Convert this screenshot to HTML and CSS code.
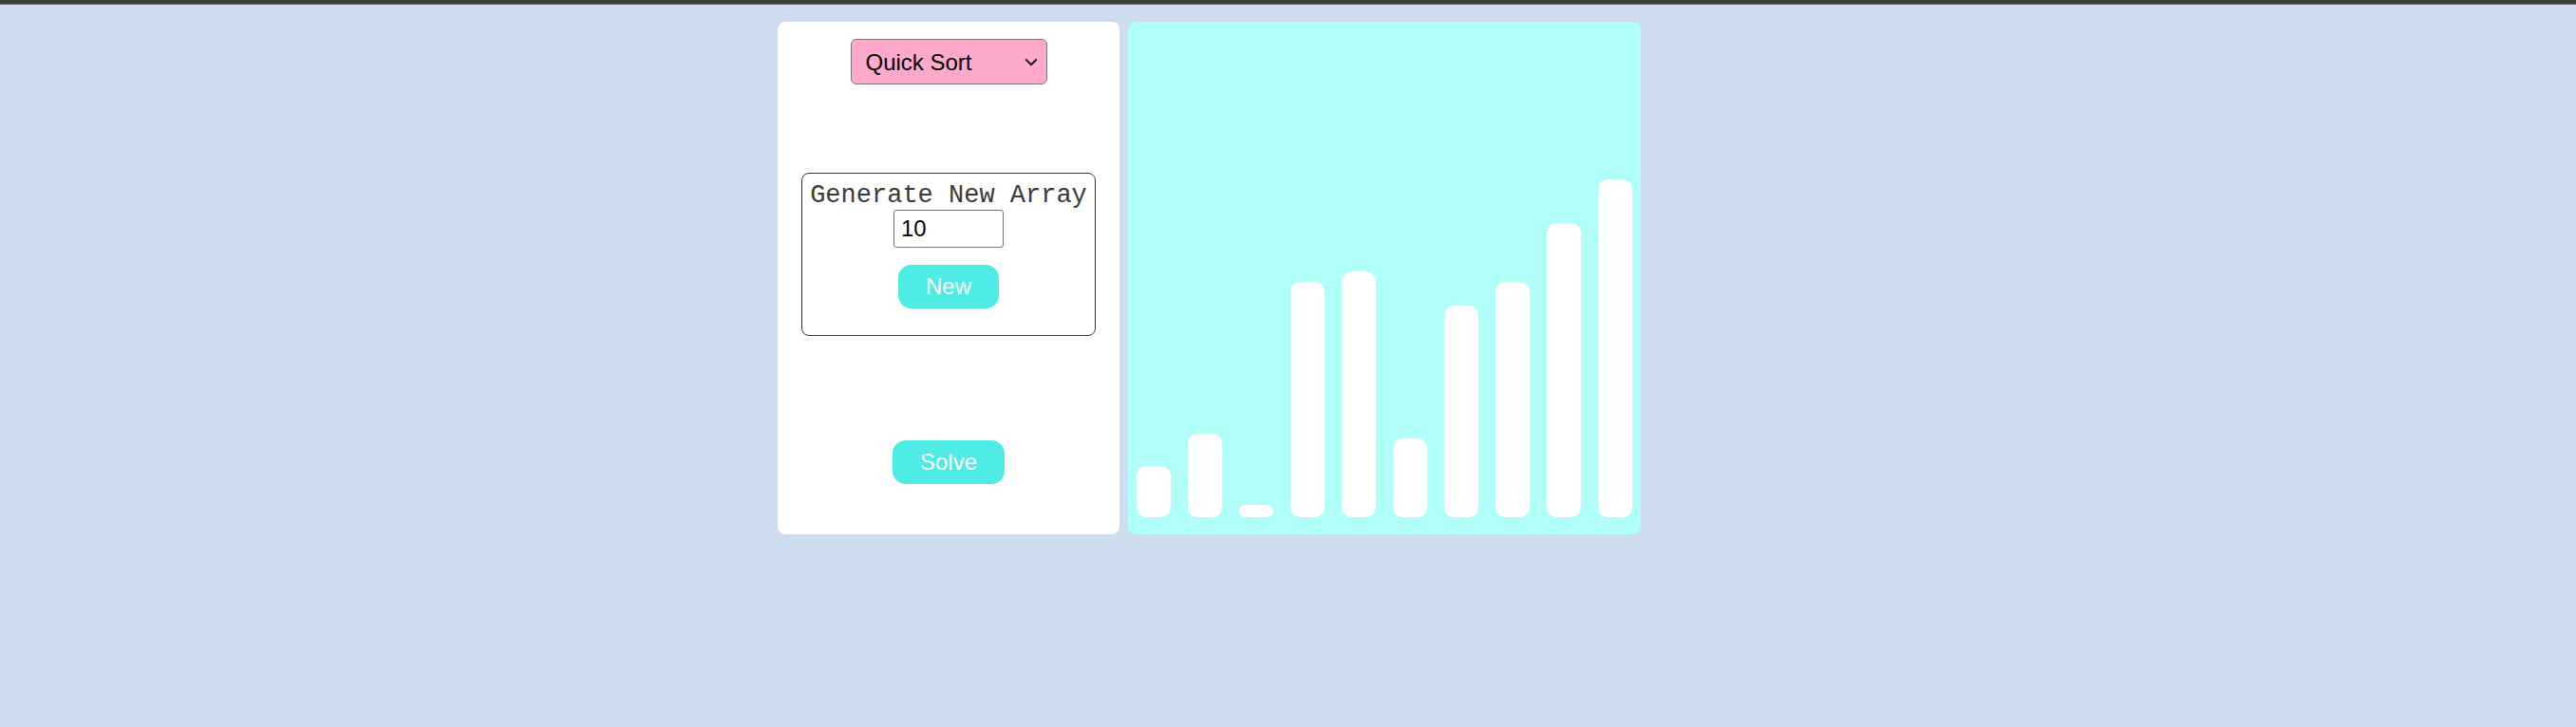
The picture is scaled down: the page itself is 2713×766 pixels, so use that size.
FILE: index.html
```
<!DOCTYPE html>
<html>
<head>
<meta charset="utf-8">
<title>Sorting Visualizer</title>
<link rel="stylesheet" href="styles.css">
</head>
<body>
<div class="topbar"></div>
<div class="main">
  <div class="controls">
    <div class="select-wrap">
      <select class="algo">
        <option>Quick Sort</option>
        <option>Bubble Sort</option>
        <option>Merge Sort</option>
      </select>
      <svg class="chev" width="14" height="9" viewBox="0 0 14 9"><path d="M1.2 1.5 L7 7.2 L12.8 1.5" fill="none" stroke="#111" stroke-width="2"/></svg>
    </div>
    <div class="gen">
      <div class="gen-title">Generate New Array</div>
      <input class="size" type="text" value="10">
      <button class="btn btn-new">New</button>
    </div>
    <button class="btn btn-solve">Solve</button>
  </div>
  <div class="chart">
    <div class="bar" style="height:54px"></div>
    <div class="bar" style="height:88px"></div>
    <div class="bar" style="height:13px"></div>
    <div class="bar" style="height:248px"></div>
    <div class="bar" style="height:259px"></div>
    <div class="bar" style="height:83px"></div>
    <div class="bar" style="height:223px"></div>
    <div class="bar" style="height:248px"></div>
    <div class="bar" style="height:310px"></div>
    <div class="bar" style="height:356px"></div>
  </div>
</div>
</body>
</html>
```
FILE: styles.css
```
html, body {
  margin: 0;
  padding: 0;
}
body {
  background: #cddcee;
  font-family: "Liberation Sans", Arial, sans-serif;
  min-height: 766px;
}
.topbar {
  height: 4px;
  background: #3e3e3e;
  border-bottom: 1px solid #6a6a6a;
}
.main {
  display: flex;
  gap: 9px;
  padding-left: 819px;
  margin-top: 18px;
}
.controls {
  width: 360px;
  height: 540px;
  flex: none;
  background: #ffffff;
  border-radius: 8px;
  display: flex;
  flex-direction: column;
  align-items: center;
  box-sizing: border-box;
  padding-top: 18px;
}
.select-wrap {
  position: relative;
  width: 207px;
  height: 48px;
}
.algo {
  appearance: none;
  -webkit-appearance: none;
  width: 207px;
  height: 48px;
  box-sizing: border-box;
  background: #ffaacc;
  border: 1px solid #767676;
  border-radius: 6px;
  font-family: "Liberation Sans", Arial, sans-serif;
  font-size: 24px;
  color: #000;
  padding: 0 0 0 15px;
  margin: 0;
}
.chev {
  position: absolute;
  right: 10px;
  top: 20px;
  pointer-events: none;
}
.gen {
  margin-top: 93px;
  width: 310px;
  height: 172px;
  box-sizing: border-box;
  border: 1px solid #333;
  border-radius: 8px;
  display: flex;
  flex-direction: column;
  align-items: center;
  padding-top: 8px;
}
.gen-title {
  font-family: "Liberation Mono", "Courier New", monospace;
  font-size: 27px;
  color: #3a3a3a;
  white-space: nowrap;
}
.size {
  width: 116px;
  height: 40px;
  box-sizing: border-box;
  border: 1px solid #767676;
  border-radius: 3px;
  font-family: "Liberation Sans", Arial, sans-serif;
  font-size: 24px;
  padding: 0 0 0 7px;
  margin: 0;
  color: #000;
  background: #fff;
}
.btn {
  background: #4eece4;
  color: #fff;
  border: none;
  font-family: "Liberation Sans", Arial, sans-serif;
  font-size: 24px;
  height: 46px;
  padding: 0 28.5px;
  border-radius: 14px;
  margin: 0;
}
.btn-new {
  margin-top: 18px;
}
.btn-solve {
  margin-top: 110px;
}
.chart {
  width: 540px;
  height: 540px;
  flex: none;
  box-sizing: border-box;
  background: #b0fff8;
  border-radius: 8px;
  display: flex;
  align-items: flex-end;
  padding-bottom: 18px;
}
.bar {
  flex: 1;
  margin: 0 9px;
  background: #ffffff;
  border-radius: 10px;
}
```
